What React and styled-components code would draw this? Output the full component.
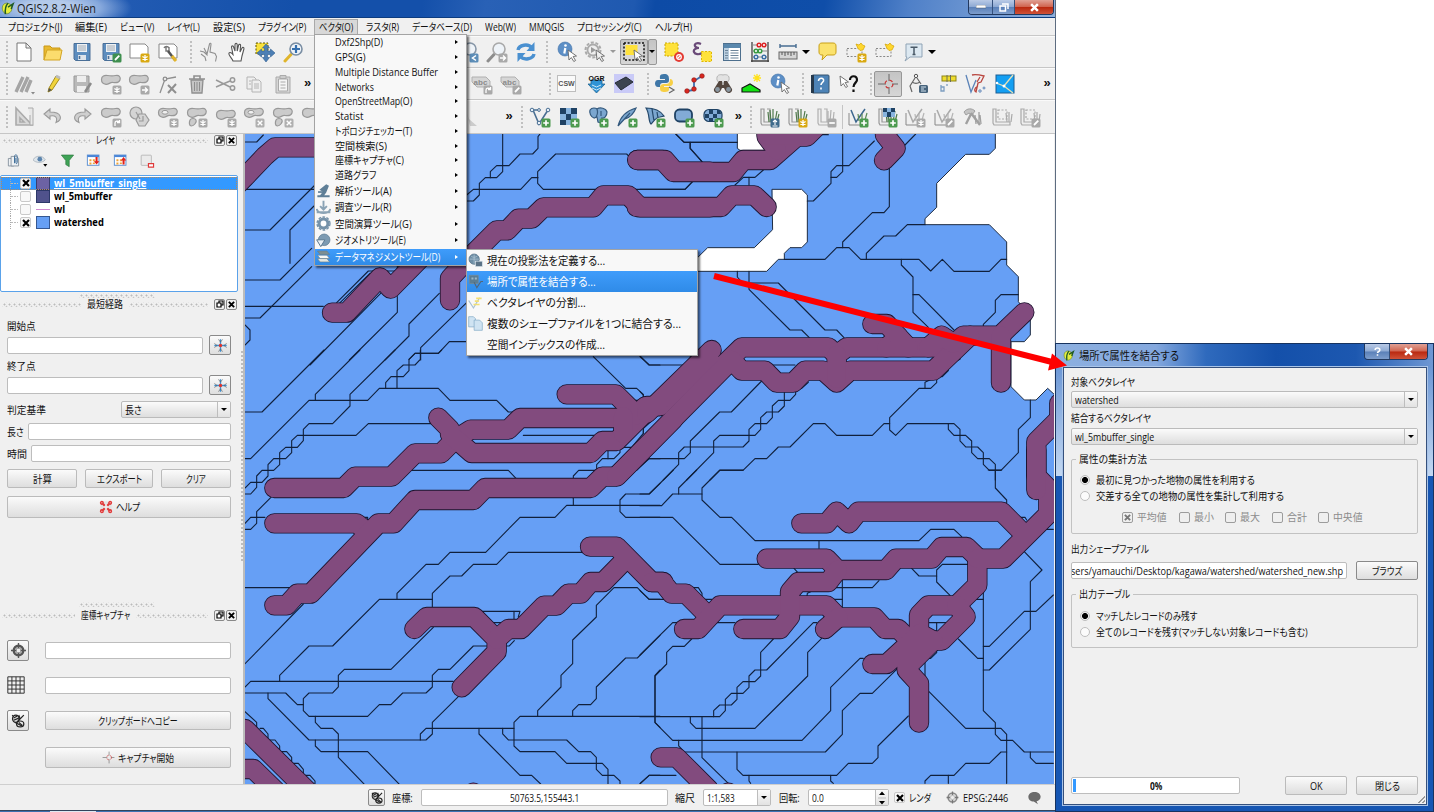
import React, { useLayoutEffect, useRef, useState } from 'react';
import styled, { createGlobalStyle, css } from 'styled-components';

const Global = createGlobalStyle`
  * { box-sizing: border-box; }
  body { margin: 0; background: #fff; overflow: hidden; }
`;

const uiFont = '"Open Sans", "Noto Sans CJK JP", sans-serif';

/* ---------- text that keeps the metrics of the narrow UI face ---------- */
const FitBox = styled.span`
  display: inline-block;
  flex: none;
  white-space: nowrap;
  text-align: left;
  text-decoration: inherit;
`;
const FitInner = styled.span`
  display: inline-block;
  transform-origin: 0 50%;
  white-space: nowrap;
  text-decoration: inherit;
`;
function Fit({ w, children }) {
  const ref = useRef(null);
  const [k, setK] = useState(1);
  useLayoutEffect(() => {
    setK(w / ref.current.offsetWidth);
  }, [w, children]);
  return (
    <FitBox style={{ width: w }}>
      <FitInner ref={ref} style={{ transform: `scaleX(${k})` }}>{children}</FitInner>
    </FitBox>
  );
}

/* ---------- frame ---------- */
const Screen = styled.div`
  position: relative;
  width: 1434px;
  height: 812px;
  overflow: hidden;
  background: #fff;
  font: 10.5px/14px ${uiFont};
  font-feature-settings: "palt";
  color: #111;
`;
const Window = styled.div`
  width: 1056px;
  height: 812px;
  display: flex;
  flex-direction: column;
  background: #f0f0f0;
  border-right: 1px solid #5d6c80;
`;
const TitleBar = styled.div`
  height: 18px;
  flex: none;
  display: flex;
  align-items: center;
  padding-left: 1px;
  background: radial-gradient(ellipse 82px 24px at 50px 8px, #b4caea 30%, #86a8dc 62%, transparent 100%),
    linear-gradient(100deg, #2b62b8 0, #1450aa 28%, #1450aa 40%, #2961b6 46%, #1f59b0 60%, #0d4ba6 62%, #0f4ea9 78%, #4f80c8 86%, #8fb0dd 100%);
  border-bottom: 1px solid #0c3c80;
  color: #1a1a1a;
  font-size: 12px;
  gap: 2px;
`;
const WinButtons = styled.div`
  display: flex;
  margin-left: auto;
  align-self: flex-start;
  height: ${(p) => p.$h || 15}px;
  margin-right: ${(p) => p.$mr || 0}px;
  border: 1px solid #22395f;
  border-top: 0;
  border-radius: 0 0 4px 4px;
  overflow: hidden;
`;
const WinButton = styled.div`
  width: ${(p) => p.$w}px;
  display: flex;
  align-items: center;
  justify-content: center;
  border-left: ${(p) => (p.$first ? 0 : '1px solid #34507c')};
  background: ${(p) => p.$red
    ? 'linear-gradient(#e0a195, #d0644f 48%, #b9280f 52%, #cf5238)'
    : 'linear-gradient(#b9cae6, #8da9d3 48%, #5a80b8 52%, #7d9dcc)'};
`;
const MenuBar = styled.div`
  height: 18px;
  flex: none;
  display: flex;
  align-items: center;
  gap: 13px;
  padding-left: 8px;
  border-bottom: 1px solid #c8c8c8;
`;
const MenuItem = styled.div`
  display: flex;
  ${(p) => p.$open && css`
    background: #d8d8d8;
    outline: 1px solid #a9a9a9;
    margin: 0 -4px;
    padding: 0 4px;
  `}
`;
const Toolbar = styled.div`
  height: ${(p) => p.$h}px;
  flex: none;
  display: flex;
  align-items: center;
  border-bottom: 1px solid #c6c6c6;
  box-shadow: inset 0 1px #fafafa;
`;
const Slot = styled.div`
  width: ${(p) => p.$w || 28.75}px;
  flex: none;
  height: 26px;
  display: flex;
  align-items: center;
  justify-content: center;
  ${(p) => p.$pressed && css`
    background: linear-gradient(#c4c4c4, #d6d6d6);
    border: 1px solid #979797;
    border-radius: 2px;
  `}
`;
const Gap = styled.div`
  flex: none;
  width: ${(p) => p.$w}px;
`;
const Handle = styled.div`
  flex: none;
  width: ${(p) => p.$w || 5}px;
  height: 24px;
  background: radial-gradient(circle, #c0c0c0 0.8px, transparent 1.2px) 0 0 / 4px 4px;
`;
const Divider = styled.div`
  width: 1px;
  flex: none;
  height: 24px;
  margin: 0 1px;
  background: #c4c4c4;
`;
const More = styled.div`
  font: bold 13px/20px "Liberation Sans", sans-serif;
  width: 10px;
  flex: none;
  text-align: center;
  padding-bottom: 2px;
`;
const Caret = styled.i`
  flex: none;
  border: ${(p) => p.$s || 4}px solid transparent;
  border-top-color: ${(p) => p.$c || '#000'};
  border-bottom: 0;
`;
const Body = styled.div`
  flex: none;
  height: 650px;
  display: flex;
`;
const Dock = styled.div`
  width: 238px;
  flex: none;
  display: flex;
  flex-direction: column;
`;
const DockSplit = styled.div`
  width: 7px;
  flex: none;
  padding: 216px 0 0 2px;
  border-right: 2px solid #bcbcbc;
  &::before {
    content: '';
    display: block;
    height: 212px;
    width: 3px;
    background: radial-gradient(circle, #bdbdbd 0.8px, transparent 1.2px) 0 0 / 4px 4px;
  }
`;
const DockHead = styled.div`
  height: 12px;
  display: flex;
  align-items: center;
  gap: 6px;
  margin-top: ${(p) => p.$mt || 0}px;
  padding: 0 1px 0 2px;
`;
const Dots = styled.div`
  height: 5px;
  flex: ${(p) => (p.$w ? 'none' : 1)};
  width: ${(p) => (p.$w ? p.$w + 'px' : 'auto')};
  margin: ${(p) => p.$m || 0};
  background: radial-gradient(circle, #bbb 0.8px, transparent 1.2px) 0 0 / 5px 5px,
    radial-gradient(circle, #c6c6c6 0.7px, transparent 1.1px) 2px 2px / 5px 5px;
`;
const MiniBtn = styled.div`
  width: 11px;
  height: 11px;
  border: 1px solid #888;
  border-radius: 2px;
  display: flex;
  align-items: center;
  justify-content: center;
  & + & { margin-left: -5px; }
`;
const LayerTools = styled.div`
  height: 29px;
  display: flex;
  align-items: center;
  padding-left: 1px;
`;
const Tree = styled.div`
  height: 117px;
  flex: none;
  border: 1px solid #5aa2ea;
  border-radius: 2px;
  background: #fff;
  padding-top: 0.5px;
`;
const TreeRow = styled.div`
  height: 13.2px;
  display: flex;
  align-items: center;
  padding-left: 9px;
  font: bold 10.5px/13px ${uiFont};
  background: ${(p) => (p.$on ? '#3399ff' : 'transparent')};
  color: ${(p) => (p.$on ? '#fff' : '#000')};
  outline: ${(p) => (p.$on ? '1px dotted #b58a5c' : 'none')};
  outline-offset: -1px;
  text-decoration: ${(p) => (p.$on ? 'underline' : 'none')};
`;
const Branch = styled.div`
  width: 8px;
  height: 13.2px;
  border-left: 1px dotted #aaa;
  background: linear-gradient(90deg, #bbb 60%, transparent 0) 0 6px / 3px 1px repeat-x;
  margin-right: 2px;
`;
const Check = styled.div`
  width: ${(p) => p.$s || 11}px;
  height: ${(p) => p.$s || 11}px;
  flex: none;
  border: 1px solid ${(p) => (p.$dim ? '#9c9c9c' : '#c9c9c9')};
  border-radius: 2px;
  background: ${(p) => (p.$dim ? '#efefef' : '#f8f8f8')};
  display: flex;
  align-items: center;
  justify-content: center;
`;
const Swatch = styled.div`
  width: 14px;
  height: ${(p) => (p.$line ? 1 : 13)}px;
  margin: 0 4px 0 5px;
  flex: none;
  background: ${(p) => p.$c};
  border: ${(p) => (p.$line ? 0 : '1px solid rgba(20,40,80,.6)')};
`;
const Row = styled.div`
  display: flex;
  align-items: center;
  height: ${(p) => p.$h}px;
  gap: ${(p) => p.$gap || 0}px;
  margin-top: ${(p) => p.$mt || 0}px;
  justify-content: ${(p) => p.$j || 'flex-start'};
  padding-left: ${(p) => p.$pl || 0}px;
`;
const Form = styled.div`
  padding: 0 7px;
`;
const Input = styled.div`
  height: 17px;
  flex: ${(p) => (p.$w ? 'none' : 1)};
  width: ${(p) => (p.$w ? p.$w + 'px' : 'auto')};
  border: 1px solid #bdbdbd;
  border-radius: 2px;
  background: #fff;
  display: flex;
  align-items: center;
  justify-content: ${(p) => p.$j || 'flex-start'};
  overflow: hidden;
  position: relative;
`;
const Button = styled.div`
  height: ${(p) => p.$h || 19}px;
  flex: ${(p) => (p.$w ? 'none' : 1)};
  width: ${(p) => (p.$w ? p.$w + 'px' : 'auto')};
  border: 1px solid ${(p) => (p.$strong ? '#8a8a8a' : '#bbb')};
  border-radius: 2px;
  background: linear-gradient(#fbfbfb, #ececec 50%, #dedede);
  display: flex;
  align-items: center;
  justify-content: center;
  gap: 3px;
`;
const Combo = styled(Button)`
  height: 17px;
  justify-content: space-between;
  padding-left: ${(p) => p.$pl || 3}px;
  background: ${(p) => (p.$white ? '#fff' : 'linear-gradient(#fbfbfb, #ececec 50%, #dedede)')};
`;
const ComboArrow = styled.div`
  width: 13px;
  height: 100%;
  border-left: 1px solid #bdbdbd;
  display: flex;
  align-items: center;
  justify-content: center;
  background: linear-gradient(#fbfbfb, #e2e2e2);
`;
const MapFrame = styled.div`
  width: 809px;
  height: 650px;
  overflow: hidden;
  svg { display: block; }
`;
const Status = styled.div`
  height: 26px;
  flex: none;
  display: flex;
  align-items: center;
  padding-left: 368px;
  border-top: 1px solid #cfcfcf;
`;
const TaskEdge = styled.div`
  height: 2px;
  flex: none;
  background: linear-gradient(90deg, #3b6fae 50px, #dfe8f2 50px, #dfe8f2 96px, #3f73b4 96px);
  border-top: 1px solid #33435c;
`;

/* ---------- popup menus ---------- */
const Popup = styled.div`
  position: absolute;
  left: ${(p) => p.$x}px;
  top: ${(p) => p.$y}px;
  width: ${(p) => p.$w}px;
  background: #f8f8f8;
  border: 1px solid #a3a3a3;
  box-shadow: 2px 2px 2px rgba(0, 0, 0, 0.55);
`;
const PopupRow = styled.div`
  height: ${(p) => p.$h}px;
  display: flex;
  align-items: center;
  padding-right: 7px;
  color: ${(p) => (p.$on ? '#fff' : '#111')};
  background: ${(p) => (p.$on ? 'linear-gradient(#3f9cfb, #2f8be8)' : 'none')};
  font-size: ${(p) => p.$fs || 10.5}px;
`;
const PopupIcon = styled.div`
  width: 20px;
  height: 16px;
  flex: none;
  display: flex;
  align-items: center;
  padding-left: 1px;
`;
const SubArrow = styled.i`
  margin-left: auto;
  margin-right: 1px;
  border: 2.5px solid transparent;
  border-left: 3.5px solid ${(p) => (p.$on ? '#fff' : '#000')};
  border-right: 0;
`;

/* ---------- dialog ---------- */
const Dialog = styled.div`
  position: absolute;
  left: 1055px;
  top: 343px;
  width: 379px;
  height: 469px;
  padding: 0 6px 6px 7px;
  border: 1px solid #17335f;
  background: linear-gradient(90deg, #8db0e0 0, #84a8de 100px, #2f6abd 150px, #1450aa 220px, #1d58b0 300px, #6f98d4) 0 0 / 100% 24px no-repeat,
    linear-gradient(#6d98d6, #c3d8f2) 0 24px / 100% 108px no-repeat, #1656b3;
  display: flex;
  flex-direction: column;
`;
const DialogTitle = styled.div`
  height: 23px;
  flex: none;
  display: flex;
  align-items: center;
  gap: 4px;
  font-size: 11.5px;
  color: #111;
`;
const Client = styled.div`
  flex: 1;
  background: #f0f0f0;
  border: 1px solid #35507c;
  outline: 1px solid #a9c4e8;
  padding: 7px 8px 0 7px;
  display: flex;
  flex-direction: column;
  position: relative;
`;
const Group = styled.div`
  border: 1px solid #c2c2c2;
  border-radius: 2px;
  height: ${(p) => p.$h}px;
  margin-top: ${(p) => p.$mt}px;
  padding-left: 8px;
`;
const GroupTitle = styled.div`
  margin: -8px 0 0 -4px;
  padding: 0 3px;
  height: 14px;
  width: max-content;
  background: #f0f0f0;
`;
const Radio = styled.div`
  width: 10px;
  height: 10px;
  border-radius: 50%;
  border: 1px solid #bdbdbd;
  background: ${(p) => (p.$on ? 'radial-gradient(circle, #000 2.6px, #eee 3.4px)' : '#fbfbfb')};
  margin-right: 6px;
  flex: none;
`;
const Dim = styled.div`
  display: flex;
  align-items: center;
  gap: 4px;
  color: #8c8c8c;
  margin-right: 11.5px;
`;
const Grip = styled.div`
  position: absolute;
  right: 1px;
  bottom: 1px;
  width: 10px;
  height: 10px;
  background: repeating-linear-gradient(135deg, #999 0 1px, transparent 1px 3px);
  clip-path: polygon(100% 0, 100% 100%, 0 100%);
`;
const Bar = styled.div`
  position: absolute;
  left: 1px;
  top: 1px;
  width: 3px;
  height: 13px;
  background: #3399ff;
`;
const ArrowLayer = styled.svg`
  position: absolute;
  left: 0;
  top: 0;
  pointer-events: none;
`;

/* ---------- icons ---------- */
const I = ({ children, s = 22 }) => (
  <svg width={s} height={s} viewBox="0 0 22 22" fill="none">{children}</svg>
);
const badgeColor = { add: '#4c9a4f', star: '#d9a912', pen: '#3f8f4f', up: '#3f6b8c', gray: '#a9a9a9', cross: '#b0b0b0', blue: '#5c8db8' };
const Badge = ({ k, t }) => (
  <g>
    <rect x="12.5" y="12.5" width="9" height="9" rx="1.5" fill={badgeColor[k]} />
    {t === '+' && <path d="M17 14.2v5.6M14.2 17h5.6" stroke="#fff" strokeWidth="1.7" />}
    {t === '*' && <path d="M17 14v6M14.4 15.5l5.2 3M14.4 18.5l5.2-3" stroke="#fff" strokeWidth="1.3" />}
    {t === '/' && <path d="M15 19l4.3-4.3" stroke="#fff" strokeWidth="1.8" />}
    {t === 'x' && <path d="M14.7 14.7l4.6 4.6M19.3 14.7l-4.6 4.6" stroke="#fff" strokeWidth="1.4" />}
    {t === '>' && <path d="M14 17h5M17 14.5l2.5 2.5-2.5 2.5" stroke="#fff" strokeWidth="1.4" />}
    {t === '<' && <path d="M19 14.5L15.5 17l3.500 2.500" stroke="#fff" strokeWidth="1.5" />}
    {t === '@' && <path d="M15 20v-3c0-2 3-2.500 4-1M19.500 14v2.500H17" stroke="#fff" strokeWidth="1.3" />}
    {t === '-' && <path d="M14.2 17h5.6" stroke="#fff" strokeWidth="1.7" />}
    {t === '^' && <path d="M17 19v-5M15 16l2-2 2 2M14.5 20h5" stroke="#fff" strokeWidth="1.1" />}
  </g>
);
const Blob = ({ y = 0 }) => (
  <path transform={`translate(0 ${y})`} d="M1.500 6.500c0-3.500 3-4.500 6-4s5 .8 8 0c3.500-.8 5.500 1.500 4.500 4.500-1 3-4 3-7 2.500-3-.4-4 2-7 1.800-3-.3-4.500-2-4.500-4.800z" fill="#cbcbcb" stroke="#989898" strokeWidth="1.200" />
);
const Blob2 = () => <path d="M4 14c1-2 5-2 6 0s-2 6-4.500 6S3 16.500 4 14z" fill="#cbcbcb" stroke="#989898" strokeWidth="1.200" />;
const Hole = () => <ellipse cx="8" cy="6.300" rx="3" ry="1.900" fill="#f0f0f0" stroke="#9a9a9a" />;
const Pointer = ({ x = 0, y = 0, f = '#fff' }) => (
  <path transform={`translate(${x} ${y})`} d="M0 0l1 10 2.300-2.500 2.500 4 1.800-1-2.500-4L8.500 6z" fill={f} stroke="#666" strokeWidth="0.900" />
);
const Lens = ({ c, h }) => (
  <g>
    <path d="M2 20l6-6.500" stroke={h} strokeWidth="3" strokeLinecap="round" />
    <circle cx="13" cy="8" r="6" fill="#eef3f8" stroke={c} strokeWidth="1.600" />
  </g>
);
const ic = {
  new: <path d="M4 2h9l5 5v13H4z M13 2v5h5" fill="#fff" stroke="#777" />,
  open: <g><path d="M2 19V5h6l2 2h8v3" fill="#e8b930" stroke="#c99715" /><path d="M2 19l3-10h15l-2 10z" fill="#fbdc6d" stroke="#d3a423" /></g>,
  save: <g><path d="M3 2.500h16v17H4.500L3 18z" fill="#5d8dbe" stroke="#4a6f97" /><path d="M6 3h10v8H6z" fill="#eef1f4" /><path d="M7 5h8M7 7h8M7 9h8" stroke="#8d99a5" strokeWidth=".8" /><path d="M7 14h8v5H7z" fill="#dfe4ea" /><path d="M8.500 15v3" stroke="#4a6f97" strokeWidth="1.600" /></g>,
  paper: <path d="M2 3h15l3 3v11H2z" fill="#fff" stroke="#888" />,
  wrench: <g><path d="M7 7c1-2 4-2 5 0M9 6v4h3V6" stroke="#777" strokeWidth="1.400" /><path d="M11 10l7 9" stroke="#555" strokeWidth="2.600" /><path d="M15 15l4 5" stroke="#e2b52b" strokeWidth="3" /></g>,
  touch: <path d="M2 10l4 1 3 3V13l2.500-10c.4-1.200 1.700-.7 1.500.4L12 11l5 1.500 1.500 3-1 5M3 13l4 3 1 4M9 13l-3-6" stroke="#8f8f8f" strokeWidth="1.100" />,
  hand: <path d="M7 20c-1-3-5-6-4-8 1-1.500 3 .5 4 1.500L5.500 6c0-1.500 1.800-1.500 2.100 0L9 10V3.500c.2-1.500 2-1.500 2.200 0V10l1.400-5.800c.4-1.400 2.200-1 2 .4L14 11l2-4c.8-1.300 2.300-.4 1.900 1L16 15l-1 5z" fill="#fff" stroke="#555" strokeWidth="1.100" />,
  panSel: <g><rect x="2" y="2" width="12" height="11" fill="#f8e13c" stroke="#5a5000" strokeDasharray="2 1.500" /><path d="M12 3l3.500 4h-2v3h3V8l4.500 4-4.500 4v-2.500h-3v3h2L12 21l-3.500-4.500h2v-3h-3V16L3 12l4.500-4v2h3V7h-2z" fill="#4d7fb5" stroke="#2f5e91" strokeWidth=".6" /></g>,
  zoomIn: <g><Lens c="#7a8ea3" h="#e0b52c" /><path d="M13 4v8M9 8h8" stroke="#356fae" strokeWidth="2.200" /></g>,
  zoomLast: <g><Lens c="#8797a8" h="#999" /><Badge k="blue" t="<" /></g>,
  zoomNext: <g><Lens c="#a9a9a9" h="#8d8d8d" /><Badge k="gray" t=">" /></g>,
  refresh: <g stroke="#4a90d0" strokeWidth="3.400"><path d="M3 9c1-5 10-7 14-2" /><path d="M19 13c-1 5-10 7-14 2" /><path d="M19.500 1v9h-8z" fill="#4a90d0" stroke="none" /><path d="M2.500 21v-9h8z" fill="#4a90d0" stroke="none" /></g>,
  info: <g><circle cx="9" cy="8" r="7" fill="#5d8fc6" stroke="#3d6ea6" strokeWidth=".6" /><circle cx="9.500" cy="4.500" r="1.300" fill="#fff" /><path d="M9.300 7l-1 5.500" stroke="#fff" strokeWidth="2.200" /><Pointer x="12" y="9" /></g>,
  gear: <g><circle cx="9" cy="9" r="7.500" stroke="#aaa" strokeWidth="2" strokeDasharray="3 1.700" /><circle cx="9" cy="9" r="5.500" stroke="#aaa" strokeWidth="1.800" fill="#eee" /><path d="M7 6l5 3-5 3z" fill="#999" /><Pointer x="12" y="9" f="#eee" /></g>,
  select: <g><rect x="1" y="2" width="20" height="17" stroke="#111" strokeWidth="1.500" strokeDasharray="2 1.600" fill="#d8d8d8" /><rect x="2.500" y="4" width="12" height="10" fill="#ffe23b" /><Pointer x="11" y="9" /></g>,
  deselect: <g><rect x="2" y="2" width="13" height="13" fill="#ffe23b" stroke="#c8a400" strokeDasharray="2 1.500" /><circle cx="16" cy="16" r="5" fill="#e33b33" /><circle cx="16" cy="16" r="2.300" stroke="#fff" strokeWidth="1.200" /><path d="M14.500 17.500l3-3" stroke="#fff" strokeWidth="1.200" /></g>,
  eps: <g><path d="M9 3C5 1 2 3 3 5s3 2 4 2C4 7 1 8.500 2 11s5 3 8 1" stroke="#6a4a78" strokeWidth="2.200" /><rect x="9.500" y="10.500" width="10" height="10" fill="#ffe23b" stroke="#e0b800" strokeDasharray="2 1.500" /></g>,
  table: <g><rect x="2.500" y="2.500" width="17" height="17" fill="#fff" stroke="#4d6f8d" /><path d="M2.500 3h17v4h-17z" fill="#5a88ad" /><path d="M3 7h5v12H3z" fill="#bcd0e0" /><path d="M9.500 9.500h8M9.500 12h8M9.500 14.500h8M9.500 17h8M4 9.500h3M4 12h3M4 14.500h3M4 17h3" stroke="#6c8499" strokeWidth="1.100" /></g>,
  abacus: <g><path d="M3 1v20M19 1v20M2 20h18" stroke="#444" strokeWidth="1.300" /><path d="M3 4h16M3 10h16M3 16h16" stroke="#888" /><g fill="#fff" strokeWidth="1.500"><g stroke="#d22"><circle cx="10" cy="4" r="1.800" /><circle cx="15" cy="4" r="1.800" /></g><g stroke="#3a9a42"><circle cx="7" cy="10" r="1.800" /><circle cx="11" cy="10" r="1.800" /></g><g stroke="#3c6fa5"><circle cx="7" cy="16" r="1.800" /><circle cx="15" cy="16" r="1.800" /></g></g></g>,
  ruler: <g><path d="M3 5h16M3 3v4M19 3v4" stroke="#476c91" strokeWidth="1.400" /><rect x="2" y="11" width="18" height="7" fill="#d5d5d5" stroke="#666" /><path d="M5 11v3M8 11v4M11 11v3M14 11v4M17 11v3" stroke="#555" /></g>,
  tip: <path d="M3 5c0-2 1-3 3-3h11c2 0 3 1 3 3v6c0 2-1 3-3 3h-6l-5 5 1-5H6c-2 0-3-1-3-3z" fill="#fbe26d" stroke="#c9a017" />,
  bm: <g><path d="M2 7.500h15v8H2z" stroke="#888" strokeDasharray="2 1.600" /><path d="M11 3l3 1 2-2 1.500 2L20 5l-2 4-3 .5-2-2z" fill="#ffd72e" stroke="#d3a200" strokeWidth=".7" /></g>,
  text: <g><path d="M4 3h16v13H8l-5 4 2-4H4z" fill="#dce8f1" stroke="#8fa3b5" /><path d="M8.500 6.200h7M12 6v7.500M10.500 13.500h3" stroke="#4a5a68" strokeWidth="1.500" /></g>,
  pens: <g stroke="#a5a5a5" strokeWidth="3.400"><path d="M3 19L10 4M8 19l7-15M13 19l5-12" /></g>,
  pen: <g><path d="M7 15L14 3l4 2-8 12-4 2z" fill="#f1d43c" stroke="#a48b1c" /><path d="M14 3l4 2" stroke="#b9bbbd" strokeWidth="3" /><path d="M6 19l1-4 3 2z" fill="#555" /></g>,
  saveG: <g><path d="M3 3h15v16H4l-1-1z" fill="#b9b9b9" stroke="#999" /><path d="M6 3h9v6H6zM6 13h9v6H6z" fill="#eee" /><path d="M14 19l6-9" stroke="#8b8b8b" strokeWidth="2.500" /></g>,
  node: <g stroke="#8f8f8f" strokeWidth="1.300"><path d="M3 20L8 6l11-2" /><circle cx="8" cy="6" r="1.800" fill="#eee" /><path d="M11 12l8 8M19 11l-8 9" strokeWidth="2" /></g>,
  trash: <g><path d="M5 7h12l-1 13H6z" fill="#c6c6c6" stroke="#8e8e8e" strokeWidth="1.300" /><path d="M3 6h16M8 3h6v3H8z" stroke="#8e8e8e" strokeWidth="1.600" /><path d="M8.500 9v9M11 9v9M13.500 9v9" stroke="#8e8e8e" /></g>,
  cut: <g stroke="#999" strokeWidth="1.500"><path d="M1 7l14 7M1 14l14-6" /><circle cx="17.500" cy="7" r="2.200" /><circle cx="17.500" cy="15" r="2.200" /></g>,
  copy: <g stroke="#b4b4b4" fill="#efefef"><path d="M4 4h7l2 2v10H4z" /><path d="M9 7h7l2 2v10H9z" /><path d="M11 11h5M11 13h5M11 15h5M6 8h2M6 11h2" /></g>,
  paste: <g stroke="#aaa"><path d="M4 4h14v16H4z" fill="#d6d6d6" /><path d="M6.500 6h9v12h-9z" fill="#f5f5f5" /><path d="M8 2.500h6v3H8z" fill="#ccc" /><path d="M8.500 9h5M8.500 12h5M8.500 15h5" /></g>,
  tri: <g stroke="#aaa" strokeWidth="1.600"><path d="M3 2l16 17H3z" fill="#d8d8d8" /><path d="M7 12l4 4H7z" fill="#f0f0f0" /><path d="M15 2h5v17h-3V9" fill="#e8e8e8" strokeWidth="1" /></g>,
  undo: <path d="M8 3L2 8l6 5v-3c5-1 8 1 6 6.500 7-3 6-10.500-6-10.500z" fill="#cfcfcf" stroke="#9a9a9a" strokeWidth="1.100" />,
  redo: <path d="M14 3l6 5-6 5v-3c-5-1-8 1-6 6.500C1 13.500 2 6 14 6z" fill="#cfcfcf" stroke="#9a9a9a" strokeWidth="1.100" />,
  hex: <g stroke="#9a9a9a" strokeWidth="1.200" fill="#d4d4d4"><circle cx="8" cy="7" r="6" /><path d="M11 8h6l4 6-4 6h-6l-3-6z" /><path d="M8 6l4 7M15 10v5h-4" fill="none" /></g>,
  abc: <g><path d="M1 4h14l4 4v6H6l-5-5z" fill="#d6d6d6" stroke="#b0b0b0" /><text x="9.500" y="11.500" fontSize="8" fontWeight="700" fill="#8c8c8c" textAnchor="middle" fontFamily="Liberation Sans">abc</text></g>,
  csw: <g><rect x="1.500" y="2.500" width="18" height="16" fill="#fafafa" stroke="#bdbdbd" /><text x="10.500" y="12.500" fontSize="7" fontWeight="700" fill="#555" textAnchor="middle" fontFamily="Liberation Sans">CSW</text></g>,
  ogr: <g><path d="M6 7h11v4h3l-8.500 9L3 11h3z" fill="#2f93d6" stroke="#22648f" strokeWidth=".8" /><path d="M7 12l4.500 2 4.500-2M7 15l4.500 2 4.500-2" stroke="#cfe8f7" /><text x="11.500" y="7.500" fontSize="7" fontWeight="700" fill="#111" textAnchor="middle" fontFamily="Liberation Sans">OGR</text></g>,
  tile: <g><rect x="1" y="1" width="20" height="19" fill="#c9caf7" /><path d="M2 10L13 4l7 5-12 8z" fill="#3c4450" stroke="#262c36" /></g>,
  python: <g><path d="M10 1c-5 0-4 3-4 5h5v1H4c-4 0-4 7 0 7h2c0-4 1-4 5-4s4-1 4-4-1-5-5-5z" fill="#3f77a8" /><path d="M11 19c5 0 4-3 4-5h-5v-1h6c4 0 4-7 0-7 0 4-1 5-5 5s-5 1-5 4 1 4 5 4z" fill="#f7cf45" /><path d="M15 14l5 3-5 3" stroke="#666" strokeWidth="1.200" /></g>,
  route: <g><path d="M4 18l7-1V8l8-5" stroke="#3f6fb0" strokeWidth="1.800" /><g fill="#d8281f" stroke="#8a1010" strokeWidth=".6"><circle cx="4" cy="18" r="2.300" /><circle cx="11" cy="16" r="2.300" /><circle cx="11" cy="7" r="2.300" /><circle cx="19" cy="3" r="2.300" /></g></g>,
  binoc: <g><path d="M5 7c-1-5 3-6 6-5 3-1 7 0 6 5l-2 3H7z" fill="#e2e2e2" stroke="#b5b5b5" /><path d="M7 8h3l.5 4h1L12 8h3l5 8c1 4-5 6-7 1l-1-2h-2l-1 2c-2 5-8 3-7-1z" fill="#53463e" /><circle cx="5.500" cy="16.500" r="2.400" fill="#8996a0" /><circle cx="16.500" cy="16.500" r="2.400" fill="#8996a0" /></g>,
  terrain: <g><path d="M2 19V15l8-4 10 6v2z" fill="#12e012" stroke="#111" strokeWidth="1.200" /><path d="M17 1v8M13 5h8M14 2l6 6M20 2l-6 6" stroke="#ffe11c" strokeWidth="1.300" /></g>,
  help: <g><rect x="3" y="2" width="17" height="18" rx="1" fill="#4d83b7" stroke="#37546f" /><path d="M3.500 2v18" stroke="#26394c" strokeWidth="3" /><path d="M9.500 8c0-4 6-3.500 5 0-.5 1.500-2.500 2-2.500 4M12 14.500v2" stroke="#fff" strokeWidth="1.600" /></g>,
  whats: <g><Pointer x="2" y="3" /><path d="M12 7c0-5 7-5 7 0 0 2.500-3.500 3-3.500 7M15.500 16.500v2.500" stroke="#111" strokeWidth="2.200" /></g>,
  cross: <g><path d="M1 11h8M15 11h6M12 1v7M12 14v7" stroke="#666" /><circle cx="12" cy="11" r="4" stroke="#c33" strokeDasharray="3.500 2.800" strokeWidth="1.200" /></g>,
  compass: <g><circle cx="9" cy="3" r="1.700" stroke="#555" /><path d="M8 5L3 13l2 6M10 5l4 6M5 9c3 2 5 2 8 0" stroke="#666" strokeWidth="1.200" /><rect x="12" y="12" width="9" height="8" rx="1.500" fill="#48647c" /><path d="M14 14h5M14 16h3M14 18h5" stroke="#cfe0ec" /></g>,
  pin: <g><rect x="6" y="3" width="14" height="5" fill="#eedc2e" stroke="#8d8416" /><path d="M11 2v7M14.500 2v7" stroke="#6d6f55" /><path d="M5 12v6h3v-4H5M11 11v2" stroke="#7c9dc0" strokeWidth="1.300" /></g>,
  vedit: <g><path d="M1 2l5 17 5-12" stroke="#5b83b8" strokeWidth="1.300" /><path d="M7 2c4-1 8 0 12 1l-3 6-3 1-2 9c-2-1-2-4 2-6M15 4l-3 5" stroke="#b9463f" strokeWidth="1.300" /><circle cx="15" cy="18" r="1.200" stroke="#5b83b8" /><circle cx="19" cy="15" r="1" stroke="#5b83b8" /></g>,
  voro: <g><rect x="2" y="2" width="18" height="18" fill="#149ff2" stroke="#1b5e94" /><path d="M2 10l8 3 9 7M10 13l9-11" stroke="#e6e0b5" strokeWidth="1.300" /><circle cx="3" cy="10" r="1.300" fill="#fff" /><circle cx="10" cy="13" r="1.500" fill="#fff" /></g>,
  vNew: <g><path d="M4 4l6 14 9-14M3 4h6" stroke="#4a6f93" strokeWidth="1.600" /><g fill="#e8f0f7" stroke="#4a6f93"><circle cx="3" cy="4" r="1.800" /><circle cx="10" cy="4" r="1.400" /><circle cx="19" cy="4" r="1.800" /><circle cx="10" cy="17" r="1.800" /></g></g>,
  raster: <g><rect x="2" y="2" width="17" height="17" fill="#88b4de" /><path d="M2 2h6v6H2zM13 2h6v6h-6zM8 8h5v6H8zM2 14h6v5H2z" fill="#1f4264" /></g>,
  pg: <path d="M3 4c2-3 6-2 7-1 3-2 9-1 10 3 0 4-3 7-5 6l-1 5-3-1-1-5-3 1c-3-1-5-5-4-8zM10 3c1 3 1 5-1 8M14 5v5" fill="#7ba6cf" stroke="#34597d" strokeWidth="1.200" />,
  feather: <path d="M2 20c2-8 7-15 18-18-2 5-5 9-11 11M2 20L14 7" fill="#7ba6cf" stroke="#34597d" strokeWidth="1.200" />,
  mssql: <path d="M2 2c6 0 14 2 18 8l-4 1c-4 0-6 4-9 7-3-3-1-10-5-16zM8 3l2 12M13 6l1 6" fill="#7ba6cf" stroke="#24486a" strokeWidth="1.200" />,
  wms: <rect x="2" y="3.500" width="17" height="12" rx="4.500" fill="#82abd6" stroke="#1f4264" strokeWidth="1.800" />,
  wcs: <g><rect x="2" y="3.500" width="18" height="12" rx="5" fill="#82abd6" stroke="#1f4264" strokeWidth="1.200" /><path d="M7 4h4v4H7zM15 4h3l1 4h-4zM3 8h4v4H3zM11 8h4v4h-4zM7 12h4v4H7zM15 12h4l-2 4h-2z" fill="#1f4264" /></g>,
  grass: <g><path d="M3 3h3v13h14v3H4l-1-2zM9 3h3v13" fill="#eee" stroke="#999" strokeWidth="1.200" /><path d="M11 16L10 6M13 16L12 4M15 16l0-13M17 16l2-11M19 16l2-8" stroke="#4f7a4b" strokeWidth="1.200" /></g>,
  grassG: <g stroke="#b0b0b0" strokeWidth="1.200"><path d="M3 3h3v13h14v3H4l-1-2zM9 3h3v13" fill="#eee" /><path d="M13 16V5M15 16l1-12M18 16l1-10" /></g>,
  regionV: (c) => <g><path d="M2 7v12h12V14" stroke="#888" /><path d="M4 4l5 12 9-13" stroke={c} strokeWidth="1.500" /><path d="M12 15l-1-7M15 15V8M18 14l2-7" stroke={c === '#aaa' ? '#b5b5b5' : '#5d8a58'} strokeWidth="1.200" /></g>,
  tools: <g stroke="#a0a0a0"><path d="M2 6c3-4 8-4 11-1l-3 4-3-2-3 2z" fill="#c4c4c4" /><path d="M9 8l-5 10M9 7l9 12" strokeWidth="2.400" /><path d="M14 18l-1-9M17 18V6M19 18l-1-9" strokeWidth="1.300" /></g>,
  reg: <g stroke="#a9a9a9" strokeWidth="1.200"><path d="M2 3h3v13h14v3H3l-1-2z" fill="#eee" /><path d="M7 4h9v9H7z" strokeDasharray="2 1.500" /><path d="M16 16l-1-9M18 16V6M20 16l1-8" /></g>,
  bubble: <path d="M11 3c5 0 9 3 9 7s-3 6-6 6.500L16 21l-6-4c-5 0-8-3-8-7s4-7 9-7z" fill="#6a6a6a" />,
  crs: <g><circle cx="11" cy="11" r="7.500" stroke="#888" strokeWidth="2.500" fill="#d8d8d8" /><path d="M11 1v6M11 15v6M1 11h6M15 11h6" stroke="#777" strokeWidth="2.200" /><circle cx="11" cy="11" r="3.500" stroke="#aaa" fill="#eee" /></g>,
  mouse: <g stroke="#222" strokeWidth="1.700"><ellipse cx="8" cy="8" rx="4.500" ry="5" fill="#ddd" /><path d="M5 7l5-3M5 10l7-3M7 13l10 5M12 3c2 3 2 4 1 6M10 12l9-9M3 3l2 2" /><ellipse cx="14" cy="15" rx="5" ry="4" /><path d="M12 13l5 4" /></g>,
  grid: <path d="M1 1h20v20H1zM6 1v20M11 1v20M16 1v20M1 6h20M1 11h20M1 16h20" stroke="#333" strokeWidth="1.200" />,
  globe: <g><circle cx="11" cy="11" r="7" stroke="#555" strokeWidth="3.500" fill="#ccc" /><path d="M11 0v8M11 14v8M0 11h8M14 11h8" stroke="#555" strokeWidth="2" /><path d="M8 8h6v6H8z" fill="#eee" stroke="#888" /></g>,
  spark: <g><path d="M11 2v18M2 11h18" stroke="#3b8fd0" strokeWidth="2" /><path d="M8 2l3 4 3-4M8 20l3-4 3 4M2 8l4 3-4 3M20 8l-4 3 4 3" stroke="#666" /><circle cx="11" cy="11" r="2.500" fill="#e2342c" /></g>,
  lifebelt: <g><circle cx="11" cy="11" r="7" stroke="#e2e2e2" strokeWidth="4" /><g fill="#fff" stroke="#e03a3a" strokeWidth="2.400"><circle cx="4.500" cy="4.500" r="2" /><circle cx="17.500" cy="4.500" r="2" /><circle cx="4.500" cy="17.500" r="2" /><circle cx="17.500" cy="17.500" r="2" /><path d="M6 6l3 3M16 6l-3 3M6 16l3-3M16 16l-3-3" strokeWidth="3.400" /></g></g>,
  clip: <g stroke="#7b8894" strokeWidth="1.200" fill="#eef1f4"><path d="M2 8h8v11H2z" /><path d="M6 5h8l3 3v11H6z" /><path d="M11 15V5c0-3 4-3 4 0v9c0 2-2 2-2 0V7" fill="none" stroke="#3a6a96" strokeWidth="1.400" /></g>,
  eye: <g><path d="M0 10c4-7 14-7 18 0-4 5-14 5-18 0z" fill="#dfe6ec" stroke="#9aa5b0" /><circle cx="10" cy="9" r="3.500" fill="#5b84ad" /><path d="M15 16h6l-3 4z" fill="#000" /></g>,
  funnel: <path d="M2 3h18l-6.500 8v9l-5-3v-6z" fill="#3fa356" stroke="#2d7740" />,
  expand: (d) => <g><rect x="2" y="3" width="17" height="15" fill="#fff" stroke="#5b8fd0" strokeWidth="1.400" /><path d="M2 4.500h17" stroke="#4a86d8" strokeWidth="3" /><path d="M5 9h3v3H5zM5 14h3v3H5zM10 9h3v3h-3zM10 14h3v2h-3z" fill="#f0a33a" /><path d={d} fill="#e32119" /></g>,
  remove: <g><rect x="3" y="3" width="14" height="14" rx="1" fill="#ebebeb" stroke="#aaa" /><path d="M13 14.500h7v5h-7z" fill="#fff" stroke="#e03a3a" strokeWidth="1.600" /></g>,
  qgis: <g><path d="M5 3c5-3 12 0 12 7S9 21 5 17 1 6 5 3z" fill="#e5ed3f" stroke="#5f7f1e" /><path d="M11 2c-4 4-5 9-4 17M11 8l8-5-3 8" stroke="#1f5a25" strokeWidth="2.400" /></g>,
  scope: <g fill="#5f7f97"><path d="M2 18h18v3H2zM5 10l10-8 4 2-4 10-3 4H6l4-5z" /><path d="M3 12h8v2.500H3z" /></g>,
  anchor: <g stroke="#8aa3b5" strokeWidth="2.800"><path d="M11 1v13M6 9l5 5 5-5M1 13c2 8 18 8 20 0M1 18h20" /></g>,
  cog: <g><circle cx="11" cy="11" r="6.500" stroke="#7592a9" strokeWidth="4.500" fill="#fff" /><circle cx="11" cy="11" r="9.500" stroke="#7592a9" strokeWidth="2" strokeDasharray="4 2" /></g>,
  geom: <g><circle cx="12" cy="10" r="8.500" fill="#7d9bb2" stroke="#56748c" /><path d="M1 10h12l-6 10z" fill="#e9eff4" stroke="#56748c" strokeWidth="1.400" /></g>,
  stack: <g stroke="#67808f" fill="#e5e8e3"><path d="M2 14h14l4 5H6z" /><path d="M2 9h14l4 5H6z" fill="#f8f8f4" /><path d="M2 3h14l4 5H6z" fill="#7d8f93" /></g>,
  world: <g><circle cx="9" cy="9" r="7.500" fill="#6f8fa6" stroke="#3f6079" /><path d="M2 9h14M9 2v14M4 4c3 3 7 3 10 0" stroke="#b6cbd9" /><rect x="11" y="12" width="10" height="8" fill="#5a7286" stroke="#dce6ee" /></g>,
  joinloc: <g><path d="M2 2h13v12H2z" fill="#5b7d93" stroke="#7a8a90" /><path d="M5 5h3v3H5zM10 5h3v3h-3z" fill="#9db7c7" /><path d="M9 12l4 8 6-9h3" stroke="#567" strokeWidth="1.600" /></g>,
  split: <g><path d="M1 8l7 11 9-15" stroke="#a8c0d4" strokeWidth="1.800" /><path d="M12 5h8M10 9h6M8 14h9" stroke="#f3df72" strokeWidth="2.400" /></g>,
  merge: <g fill="#cfe3f2" stroke="#7fa8c6"><path d="M1 1h7l3 3v12H1z" /><path d="M9 6h8l4 4v11H9z" /></g>,
};

const X = ({ c = '#000', s = 8 }) => (
  <svg width={s} height={s} viewBox="0 0 8 8"><path d="M1 1l6 6M7 1L1 7" stroke={c} strokeWidth="2.200" /></svg>
);
const Tool = ({ k, b, w, s, pressed }) => (
  <Slot $w={w} $pressed={pressed}>
    <I s={s}>
      {typeof k === 'string' ? ic[k] : k}
      {b && <Badge k={b[0]} t={b[1]} />}
    </I>
  </Slot>
);

/* ---------- map ---------- */
/* Each sheet has its own origin; its lines are digitised at three units per pixel. */
const sheets = [
  {
    at: [240, 120],
    lines: ['15,66 50,66 70,45', '15,208 60,208 225,208', '15,330 90,330 225,195', '150,430 150,330 222,258', '15,480 120,480 215,385', '15,559 250,559', '15,594 60,594 215,440', '15,615 30,630 30,660 15,675'],
    belts: ['-20,206 15,171 75,108 105,82 225,82'],
  },
  {
    at: [310, 120],
    lines: [
      '578,40 578,155 560,173 541,173 541,155 560,137 597,137 630,102 668,102 684,85 684,50 690,42',
      '541,173 526,173 508,190 508,225 490,243 470,243', '470,225 490,208 632,208 665,173 684,173',
      '960,112 950,102 737,102 683,155 683,190 700,208 1125,208 1148,185', '1097,42 1122,67 1200,67', '1140,67 1140,85 1176,125',
      '80,548 175,453 262,453 262,435', '88,550 180,460', '0,735 212,520', '262,530 262,577 118,720',
      '388,520 297,612 297,648 225,720', '470,548 332,683 332,720', '468,665 418,665 385,700 315,700 297,718',
    ],
    belts: [
      '982,120 1065,120 1095,155 1200,155',
      '1200,262 990,262 955,226 880,226 850,262 700,262 665,296 625,296 592,331 560,331 480,411 420,475 420,541',
      '66,578 110,578 210,472 242,506 425,320',
    ],
  },
  {
    at: [240, 350],
    lines: [
      '252,0 66,186 0,186', '360,0 226,133 226,151',
      '465,0 330,133 330,168 278,221 207,221 190,238 190,272 172,292 137,292 119,308 119,344 101,361 66,361 50,378 50,412 32,432 15,432',
      '15,326 32,326 207,151 383,151 418,115 595,115 630,151 770,151 805,186 820,186',
      '600,221 385,221 348,256 172,256 155,272 155,308 137,326 101,326 84,344 84,378 66,397 32,397 15,414',
      '437,115 437,98 453,80 490,80 507,62 507,28 525,10 541,10 541,0', '471,115 471,62 490,45 525,45 541,28 541,10 595,10 605,0',
      '95,440 50,485 50,520 32,538 15,538', '75,502 32,502 15,520', '15,713 150,713', '190,762 15,941', '512,361 805,361 828,385',
      '850,256 1110,256', '365,502 383,502 383,515', '1060,20 1157,115 1190,115 1210,133 1210,150', '1180,151 1205,151', '1200,18 1227,45 1260,45',
      '1000,385 1000,378 1016,361 1070,361 1070,344 1087,326 1104,326 1104,300', '1104,326 1122,326 1140,308 1140,292 1175,292 1210,250 1210,235 1245,200',
      '1260,326 1227,326 1190,361 1180,361', '1000,445 1000,466', '1260,466 980,466 945,502 840,502 737,607 630,607 595,643 558,643 471,730 471,748',
      '1260,400 1227,432 1157,432 1140,450 1140,485 1157,502 1260,502', '1025,607 805,607 770,643 700,643 665,678 630,678 577,730 577,770',
      '577,748 418,748 278,888 207,888 119,976 119,994', '15,1011 32,994 640,994',
      '580,832 453,958 313,958 295,976 295,1011 278,1029 207,1029 190,1046 190,1082 207,1099 383,1099 418,1064 453,1064 488,1029 558,1029 577,1011 577,976 595,958 630,958 700,888 740,888',
      '722,784 840,784 835,800', '822,784 822,808', '760,818 785,818', '800,888 808,888 823,872', '15,1029 137,1029 172,1064 190,1064',
      '84,1029 84,1046 207,1170 558,1170 577,1152 577,1117 655,1040', '541,1170 541,1152 558,1135 822,1135',
      '226,1099 226,1117 243,1135 278,1135 295,1152 295,1222 375,1305', '226,1170 226,1188 243,1205 383,1205 480,1305', '15,1085 50,1117 50,1135',
      '60,1135 70,1135 84,1152 84,1165', '90,1170 105,1170 119,1188 119,1200', '125,1205 140,1205 155,1222 155,1235', '160,1240 175,1240 190,1258 190,1272', '195,1276 210,1276 225,1293 225,1302',
      '717,1135 717,1152 840,1276 875,1276 902,1302', '788,1135 788,1152 805,1170 980,1170 1016,1205 1052,1205 1069,1222 1069,1258 1087,1276 1122,1276 1140,1293 1140,1302',
      '1260,1099 840,1099 822,1117 822,1188 840,1205 945,1205 980,1240 1087,1240 1104,1258 1104,1302',
      '893,1099 893,1082 963,1011 963,976 998,941 998,870 1069,801 1069,766 1122,713 1192,713 1227,748 1260,748',
      '998,1099 998,1082 1016,1064 1052,1064 1069,1046 1069,1011 1157,924 1192,924 1260,856', '1260,960 1245,976 1245,1117 1260,1132', '1200,1302 1227,1276 1260,1276',
    ],
    belts: [
      '103,414 311,414 345,380 455,380 525,310 603,310 645,268 692,239 805,239 840,204 1170,204', '595,203 630,238 630,252 695,309 1052,309 1087,273 1130,273 1225,178',
      '980,133 1128,133 1190,195 1215,170 1260,168', '1150,200 1150,250', '103,520 350,520 385,548', '103,766 140,766 172,731 212,731 415,520 461,520 525,450 700,450 735,414 1052,414 1087,380 1130,380 1300,208',
      '523,837 560,801 703,801 770,868 770,905 665,1012', '770,868 805,837 843,837 912,767 950,767 985,731 1022,731 1052,696 1090,696 1155,630', '1050,590 1130,590 1235,696 1270,696',
      '15,1137 30,1152 210,1330', '-20,1257 40,1257 130,1345', '700,1328 700,1340',
    ],
  },
  {
    at: [640, 470],
    lines: [
      '0,72 28,72 100,0', '170,0 116,54 116,72', '0,107 65,107 98,72 186,72', '310,0 240,0 186,54 186,90 240,142 275,142 345,212 837,212 872,178 942,178 965,200', '537,212 537,235',
      '0,142 98,142 240,283 355,283', '1045,0 1085,0', '1066,0 1066,54 1100,90 1100,100', '1140,142 1155,142 1160,150', '1210,178 1240,178',
      '1150,242 1206,300 1171,335 1171,478 1048,600 1030,600', '1240,375 1188,424 1153,424 1048,529 1030,529', '1030,350 1030,722 1066,758 1066,793 1083,811 1118,811 1153,846 1240,846', '1000,388 1030,388',
      '867,665 977,775 1083,775 1100,793 1100,940', '955,507 1013,565 1030,565', '1171,846 1171,863 1188,880 1240,880', '1100,846 1083,846 1048,880 977,880 942,916 872,916 855,933 855,940', '925,916 925,940',
      '815,295 837,318 890,318', '985,283 907,283 890,300 890,336 930,376', '462,295 473,307', '607,330 607,410', '580,353 697,353 717,332', '607,388 480,388', '500,388 502,370 512,365',
      '0,362 28,388 90,388', '160,353 175,353 186,370 186,382', '195,388 215,388', '865,458 930,458', '890,458 890,483', '890,541 890,548 872,565 855,565', '855,570 855,640',
      '0,555 98,458 120,458', '225,458 285,458', '155,507 133,529 98,529 80,547 80,582 45,618 45,758 98,811 486,811 572,722 572,652 660,565 670,565',
      '530,458 520,458 380,600 345,600 327,618 327,652 309,670 274,670 256,688 256,722 239,740 0,740', '400,507 362,547 362,618 345,635 309,635 291,652 291,688 274,705 239,705 221,722 221,740',
      '545,505 503,547 503,618 345,775 168,775 151,758 151,740', '186,740 186,863 265,940', '116,811 116,828 133,846 556,846 607,793 607,722 660,670 697,670 770,598',
      '291,846 291,898 309,916 590,916 625,880 697,880 714,863 714,828 805,738', '327,916 327,933 332,940', '572,916 572,933 580,940', '0,940 28,916 108,916',
    ],
    belts: [
      '35,336 67,336 95,371 138,371 200,433', '132,477 175,477 240,406 560,406 595,442 703,442 735,477 775,477 810,512', '380,266 560,266 593,300 738,300 768,266 875,266 905,231 980,231 1012,262 1012,345 950,406 865,406 837,435 837,540',
      '593,300 565,336 475,336 450,365 450,440 420,477 310,477', '555,477 595,442', '484,160 560,160 590,125 627,160 655,125 1085,125 1155,195', '1012,266 1090,266 1225,132 1225,55 1189,18 1189,-60',
      '950,406 977,440 905,512 830,512', '697,582 740,582 840,490 880,512 800,592 800,600 837,640 837,758', '62,862 110,862 205,957', '265,968 266,970',
    ],
  },
  {
    at: [640, 130],
    lines: [
      '108,12 133,37 292,37', '151,37 151,55 186,95', '0,178 135,178 157,155', '285,165 310,142 345,142 370,120', '327,142 327,165', '565,14 530,14',
      '608,12 608,125 590,142 573,142 573,125 590,107 627,107 703,33', '573,142 573,160 520,213 502,213', '748,115 748,230 732,248 697,248 608,336 608,353', '795,45 827,12',
      '433,388 555,388 590,353 627,353 662,388 837,388 872,423 907,388 942,424 1048,424 1083,388 1100,388', '679,388 679,370 732,318 767,318 802,284 855,284',
      '784,388 784,405 819,441 819,547 865,592', '819,494 837,494 942,600', '1135,494 1083,494 1066,511 1066,547 1030,583 1030,590', '292,424 292,441 300,450', '327,424 327,478 450,600 485,600 508,623',
      '327,459 415,459 555,600 590,600 612,623', '0,680 28,705 140,705', '151,678 151,700', '400,705 465,705', '750,670 785,670', '365,753 274,846 239,846 151,933 151,968 133,986 28,986 0,1010',
      '505,757 485,775 467,775 467,793 450,811 415,811 397,828 397,863 380,881 345,881 327,898 327,933 309,951 133,951 116,968 116,1003 70,1050',
      '433,788 433,828 415,846 380,846 362,863 362,898 345,916 239,916 221,933 221,968 140,1050', '210,1050 239,1021 309,1021 345,986 380,986 415,951 450,951 520,881 555,881 590,916 697,916 732,881 749,881',
      '890,750 890,758 872,775 837,775 749,863 749,900 767,916 802,881 925,881 925,898 942,916 977,916 995,933 995,968 1013,986 1048,986 1066,1003 1066,1050',
      '925,881 942,881 960,898 960,933 977,951 1013,951 1030,968 1030,1003 1048,1021 1083,1021 1135,968 1135,898 1171,863 1171,810', '855,775 855,757 890,740 907,740 925,722 925,705 960,688 960,670 995,650', '0,785 10,795 10,803', '10,910 10,895 50,860',
    ],
    belts: [
      '-8,90 67,90 100,126 280,126 310,90 390,90 470,20 500,20 545,-25', '380,-10 380,20 410,60', '380,15 480,15', '-10,231 243,231 275,196 343,196 380,231', '732,91 767,55 735,15 735,-20',
      '20,828 60,828 203,688 235,720 305,652 565,652 590,675 620,652 720,652 930,652 970,617 1080,617 1153,547', '-70,1038 250,715 275,690 305,722 375,722 410,758 460,758 495,722 550,722 590,758 630,722 880,722 990,617',
      '590,675 590,745', '20,850 215,660', '697,582 740,582 775,620 740,652', '775,620 805,652', '865,652 905,617 940,640', '1083,617 1083,758', '1189,1080 1189,935 1262,862', '1258,820 1258,870',
    ],
  },
];
const sea = [
  '1066,0 1066,55 1048,73 977,73 890,160 890,232 855,266 855,284 1048,284 1100,336 1100,405 1135,440 1135,515 1171,560 1171,615 1153,635 1113,635 1113,770 1153,810 1188,810 1223,775 1250,800 1250,0',
  '397,178 485,178 502,195 502,336 485,353 450,353 433,370 433,388 415,388 380,424 150,424 150,405 203,353 343,353 397,300',
  '292,0 292,55 300,61 380,61 380,0',
];
const Sheet = ({ at, children }) => <g transform={`translate(${at[0]} ${at[1]}) scale(.33333)`}>{children}</g>;
function MapView() {
  return (
    <svg width="809" height="650" viewBox="245 134 809 650" fill="none" strokeLinejoin="round" strokeLinecap="round">
      <rect x="245" y="134" width="809" height="650" fill="#669ff5" />
      <Sheet at={[640, 130]}>
        {sea.map((p) => <polygon key={p} points={p} fill="#fff" stroke="#1c2a40" strokeWidth="3" />)}
      </Sheet>
      {sheets.map((s) => (
        <Sheet key={s.at} at={s.at}>
          {s.lines.map((p) => <polyline key={p} points={p} stroke="#10203c" strokeWidth="3.3" />)}
        </Sheet>
      ))}
      {[['#1d1430', 61], ['#824b7e', 56]].map(([c, w]) => (
        <g key={c} stroke={c} strokeWidth={w}>
          {sheets.map((s) => (
            <Sheet key={s.at} at={s.at}>{s.belts.map((p) => <polyline key={p} points={p} />)}</Sheet>
          ))}
        </g>
      ))}
    </svg>
  );
}

const menus = [['プロジェクト(J)', 54], ['編集(E)', 32], ['ビュー(V)', 34], ['レイヤ(L)', 33], ['設定(S)', 32], ['プラグイン(P)', 48], ['ベクタ(O)', 34], ['ラスタ(R)', 33], ['データベース(D)', 60], ['Web(W)', 31], ['MMQGIS', 35], ['プロセッシング(C)', 65], ['ヘルプ(H)', 37]];
const vector = [['Dxf2Shp(D)', 48], ['GPS(G)', 31], ['Multiple Distance Buffer', 103], ['Networks', 39], ['OpenStreetMap(O)', 77], ['Statist', 28], ['トポロジチェッカー(T)', 77], ['空間検索(S)', 52], ['座標キャプチャ(C)', 69], ['道路グラフ', 41],
  ['解析ツール(A)', 57, 'scope'], ['調査ツール(R)', 57, 'anchor'], ['空間演算ツール(G)', 77, 'cog'], ['ジオメトリツール(E)', 71, 'geom'], ['データマネジメントツール(D)', 105, 'stack']];
const submenu = [['現在の投影法を定義する...', 118, 'world'], ['場所で属性を結合する...', 109, 'joinloc'], ['ベクタレイヤの分割...', 99, 'split'], ['複数のシェープファイルを1つに結合する...', 194, 'merge'], ['空間インデックスの作成...', 118]];
const layers = [['wl_5mbuffer_single', 92, '#6c62a4', true], ['wl_5mbuffer', 58, '#50528c', false], ['wl', 11, '#d08ad0', false], ['watershed', 50, '#669ff5', true]];

const Head = ({ t, w, mt }) => (
  <DockHead $mt={mt}>
    <Dots /><Fit w={w}>{t}</Fit><Dots />
    <MiniBtn><svg width="8" height="8" viewBox="0 0 8 8" fill="#fff" stroke="#000" strokeWidth="1.200"><path d="M3 1h4v4H3z" /><path d="M1 3h4v4H1z" /></svg></MiniBtn>
    <MiniBtn><X s={7} /></MiniBtn>
  </DockHead>
);

export default function App() {
  return (
    <Screen>
      <Global />
      <Window>
        <TitleBar>
          <I s={14}>{ic.qgis}</I>
          <Fit w={79}>QGIS2.8.2-Wien</Fit>
          <WinButtons $mr={1}>
            <WinButton $w={23} $first><svg width="10" height="4"><rect width="10" height="3" fill="#fff" stroke="#456" strokeWidth=".5" /></svg></WinButton>
            <WinButton $w={22}><svg width="10" height="9" viewBox="0 0 10 9" fill="none" stroke="#fff" strokeWidth="1.500"><path d="M3 1h6v5M1 3h5.500v5H1z" /></svg></WinButton>
            <WinButton $w={39} $red><X c="#fff" s={9} /></WinButton>
          </WinButtons>
        </TitleBar>
        <MenuBar>
          {menus.map(([t, w]) => <MenuItem key={t} $open={t === 'ベクタ(O)'}><Fit w={w}>{t}</Fit></MenuItem>)}
        </MenuBar>
        <Toolbar $h={32}>
          <Gap $w={5} /><Handle $w={5} />
          <Tool k="new" /><Tool k="open" /><Tool k="save" /><Tool k="save" b={['pen', '/']} /><Tool k="paper" b={['star', '*']} />
          <Tool k={<>{ic.paper}{ic.wrench}</>} />
          <Gap $w={6} /><Handle /><Gap $w={1} /><Tool k="touch" w={28} /><Tool k="hand" /><Tool k="panSel" w={28} /><Tool k="zoomIn" />
          <Gap $w={146} /><Tool k="zoomLast" /><Tool k="zoomNext" /><Tool k="refresh" /><Gap $w={5} /><Handle /><Gap $w={2} />
          <Tool k="info" /><Tool k="gear" /><Caret $c="#999" $s={3.5} /><Gap $w={4} />
          <Tool k="select" w={28} pressed /><Slot $w={9} $pressed><Caret $s={3.5} /></Slot>
          <Gap $w={3} /><Tool k="deselect" /><Tool k="eps" /><Tool k="table" /><Tool k="abacus" /><Tool k="ruler" w={27} /><Caret /><Gap $w={3} />
          <Tool k="tip" /><Tool k="bm" b={['star', '*']} /><Tool k="bm" /><Tool k="text" /><Caret />
        </Toolbar>
        <Toolbar $h={32}>
          <Gap $w={5} /><Handle $w={5} />
          <Tool k={<>{ic.pens}<path d="M18 19h4l-2 2.500z" fill="#888" /></>} /><Tool k="pen" /><Tool k="saveG" /><Tool k={<Blob />} b={['gray', '*']} /><Tool k={<Blob />} b={['gray', '>']} />
          <Tool k="node" /><Tool k="trash" /><Tool k="cut" /><Tool k="copy" /><Tool k="paste" /><Gap $w={5} /><More>»</More>
          <Gap $w={155} /><Tool k="abc" b={['gray', '@']} /><Tool k="abc" b={['gray', '/']} /><Gap $w={22.5} /><Handle />
          <Tool k="csw" /><Tool k="ogr" /><Tool k="tile" /><Gap $w={7} /><Handle />
          <Tool k="python" /><Tool k="route" /><Tool k="binoc" /><Tool k="terrain" /><Tool k="info" /><Gap $w={6} /><Handle />
          <Tool k="help" /><Tool k="whats" /><Gap $w={6} /><Handle /><Tool k="cross" w={28} pressed />
          <Gap $w={2} /><Tool k="compass" /><Tool k="pin" /><Tool k="vedit" /><Tool k="voro" /><Gap $w={23} /><More>»</More>
        </Toolbar>
        <Toolbar $h={34}>
          <Gap $w={5} /><Handle $w={5} />
          <Tool k="tri" /><Tool k="undo" /><Tool k="redo" /><Tool k={<Blob />} b={['gray', '@']} /><Tool k="hex" />
          <Tool k={<><Blob /><Hole /></>} b={['gray', '*']} /><Tool k={<><Blob /><Blob2 /></>} b={['gray', '*']} /><Tool k={<Blob y={2} />} b={['gray', '*']} />
          <Tool k={<><Blob /><Hole /></>} b={['cross', 'x']} /><Tool k={<><Blob /><Blob2 /></>} b={['cross', 'x']} /><Tool k={<Blob />} />
          <Gap $w={134} /><Tool k={<path d="M1 3l3 8 2 9h7l-8-7z" fill="#ccc" />} /><Gap $w={15} /><More>»</More><Gap $w={6} /><Handle /><Gap $w={1} />
          <Tool k="vNew" b={['add', '+']} /><Tool k="raster" b={['add', '+']} /><Tool k="pg" b={['add', '+']} /><Tool k="feather" b={['add', '+']} /><Tool k="mssql" b={['add', '+']} /><Tool k="wms" b={['add', '+']} /><Tool k="wcs" b={['add', '+']} />
          <Gap $w={6} /><More>»</More><Gap $w={6} /><Handle />
          <Tool k="grass" b={['up', '^']} /><Tool k="grass" b={['star', '*']} /><Tool k="grassG" b={['gray', '-']} /><Divider />
          <Tool k={ic.regionV('#3d678f')} b={['add', '+']} /><Tool k={<>{ic.grass}<path d="M7 2h12v9H7z" fill="#88b4de" /><path d="M7 2h4v4H7zM15 2h4v4h-4zM11 6h4v5h-4z" fill="#1f4264" /></>} b={['add', '+']} /><Tool k={ic.regionV('#aaa')} b={['gray', '*']} /><Tool k={ic.regionV('#aaa')} b={['gray', '/']} />
          <Tool k="tools" /><Tool k="reg" /><Tool k="reg" b={['gray', '/']} />
        </Toolbar>
        <Body>
          <Dock>
            <Head t="レイヤ" w={19} />
            <LayerTools>
              {['clip', 'eye', 'funnel'].map((k) => <Tool key={k} k={k} w={26.5} s={15} />)}
              <Tool k={ic.expand('M14 6h3v6h2.500L15.500 17l-4-5H14z')} w={26.5} s={15} />
              <Tool k={ic.expand('M14 17h3v-6h2.500L15.500 6l-4 5H14z')} w={26.5} s={15} />
              <Tool k="remove" w={26.5} s={16} />
            </LayerTools>
            <Tree>
              {layers.map(([t, w, c, on], i) => (
                <TreeRow key={t} $on={i === 0}>
                  <Branch /><Check $s={11}>{on && <X s={8} />}</Check>
                  <Swatch $c={c} $line={i === 2} /><Fit w={w}>{t}</Fit>
                </TreeRow>
              ))}
            </Tree>
            <Dots $w={76} $m="1px 0 0 79px" />
            <Head t="最短経路" w={36} mt={0} />
            <Form>
              <Row $h={14} $mt={9}><Fit w={29}>開始点</Fit></Row>
              <Row $h={20} $mt={2} $gap={6}><Input $w={196} /><Button $w={22} $h={20} $strong><I s={15}>{ic.spark}</I></Button></Row>
              <Row $h={14} $mt={4}><Fit w={29}>終了点</Fit></Row>
              <Row $h={20} $mt={2} $gap={6}><Input $w={196} /><Button $w={22} $h={20} $strong><I s={15}>{ic.spark}</I></Button></Row>
              <Row $h={17} $mt={6} $j="space-between"><Fit w={39}>判定基準</Fit><Combo $w={110}><Fit w={17}>長さ</Fit><ComboArrow><Caret $s={3.5} /></ComboArrow></Combo></Row>
              <Row $h={17} $mt={5} $gap={4}><Fit w={17}>長さ</Fit><Input /></Row>
              <Row $h={17} $mt={5} $gap={4}><Fit w={20}>時間</Fit><Input /></Row>
              <Row $h={19} $mt={7} $gap={8}><Button $w={70}><Fit w={19}>計算</Fit></Button><Button $w={68}><Fit w={45}>エクスポート</Fit></Button><Button><Fit w={20}>クリア</Fit></Button></Row>
              <Row $h={22} $mt={8}><Button $h={22}><I s={14}>{ic.lifebelt}</I><Fit w={24}>ヘルプ</Fit></Button></Row>
            </Form>
            <Dots $w={76} $m="84px 0 0 79px" />
            <Head t="座標キャプチャ" w={49} mt={2} />
            <Form>
              <Row $h={21} $mt={19} $gap={16}><Button $w={22} $h={21} $strong><I s={15}>{ic.globe}</I></Button><Input /></Row>
              <Row $h={18} $mt={15} $gap={20}><I s={18}>{ic.grid}</I><Input /></Row>
              <Row $h={21} $mt={16} $gap={16}><Button $w={22} $h={21} $strong><I s={16}>{ic.mouse}</I></Button><Button><Fit w={80}>クリップボードへコピー</Fit></Button></Row>
              <Row $h={21} $mt={16} $pl={38}><Button $h={21}><I s={13}>{ic.cross}</I><Fit w={56}>キャプチャ開始</Fit></Button></Row>
            </Form>
          </Dock>
          <DockSplit />
          <MapFrame><MapView /></MapFrame>
        </Body>
        <Status>
          <Button $w={17} $h={17} $strong><I s={14}>{ic.mouse}</I></Button><Gap $w={7} /><Fit w={21}>座標:</Fit><Gap $w={8} />
          <Input $w={247} $j="center"><Fit w={69}>50763.5,155443.1</Fit></Input><Gap $w={7} /><Fit w={20}>縮尺</Fit><Gap $w={8} />
          <Combo $w={68} $white><Fit w={28}>1:1,583</Fit><ComboArrow><Caret $s={3.5} /></ComboArrow></Combo><Gap $w={8} /><Fit w={21}>回転:</Fit><Gap $w={8} />
          <Combo $w={81} $h={19} $white><Fit w={12}>0.0</Fit><ComboArrow><svg width="8" height="14" viewBox="0 0 8 14"><path d="M1 4l3-3.500L7 4zM1 10l3 3.500L7 10z" /><path d="M0 7h8" stroke="#bbb" /></svg></ComboArrow></Combo>
          <Gap $w={5} /><Check><X s={8} /></Check><Gap $w={4} /><Fit w={22}>レンダ</Fit><Gap $w={15} /><I s={13}>{ic.crs}</I><Gap $w={4} /><Fit w={45}>EPSG:2446</Fit><Gap $w={19} /><I s={15}>{ic.bubble}</I>
        </Status>
        <TaskEdge />
      </Window>

      <Popup $x={314} $y={34} $w={153}>
        {vector.map(([t, w, k], i) => (
          <PopupRow key={t} $h={i < 10 ? 14.75 : 16.5} $on={i === 14}>
            <PopupIcon>{k && <I s={15}>{ic[k]}</I>}</PopupIcon>
            <Fit w={w}>{t}</Fit><SubArrow $on={i === 14} />
          </PopupRow>
        ))}
      </Popup>
      <Popup $x={466} $y={249} $w={232}>
        {submenu.map(([t, w, k], i) => (
          <PopupRow key={t} $h={21} $on={i === 1} $fs={11}>
            <PopupIcon>{k && <I s={15}>{ic[k]}</I>}</PopupIcon>
            <Fit w={w}>{t}</Fit>
          </PopupRow>
        ))}
      </Popup>

      <Dialog>
        <DialogTitle>
          <I s={12}>{ic.qgis}</I><Fit w={100}>場所で属性を結合する</Fit>
          <WinButtons $h={16} $mr={-1}>
            <WinButton $w={24} $first><svg width="7" height="9" viewBox="0 0 9 11" fill="none" stroke="#fff" strokeWidth="2"><path d="M1.500 3.500c0-3.500 6-3.500 6 0 0 2-3 2-3 4M4.500 9v2" /></svg></WinButton>
            <WinButton $w={38} $red><X c="#fff" s={9} /></WinButton>
          </WinButtons>
        </DialogTitle>
        <Client>
          <Fit w={64}>対象ベクタレイヤ</Fit>
          <Row $h={17} $mt={2}><Combo><Fit w={44}>watershed</Fit><ComboArrow><Caret $s={3} /></ComboArrow></Combo></Row>
          <Row $h={14} $mt={3}><Fit w={80}>結合するベクタレイヤ</Fit></Row>
          <Row $h={17} $mt={3}><Combo><Fit w={79}>wl_5mbuffer_single</Fit><ComboArrow><Caret $s={3} /></ComboArrow></Combo></Row>
          <Group $h={75} $mt={14}>
            <GroupTitle><Fit w={68}>属性の集計方法</Fit></GroupTitle>
            <Row $h={16} $mt={6}><Radio $on /><Fit w={159}>最初に見つかった地物の属性を利用する</Fit></Row>
            <Row $h={16}><Radio /><Fit w={188}>交差する全ての地物の属性を集計して利用する</Fit></Row>
            <Row $h={14} $mt={6} $pl={42}>
              {[['平均値', 30], ['最小', 20], ['最大', 20], ['合計', 20], ['中央値', 30]].map(([t, w], i) => (
                <Dim key={t}><Check $dim>{i === 0 && <X c="#777" s={7} />}</Check><Fit w={w}>{t}</Fit></Dim>
              ))}
            </Row>
          </Group>
          <Row $h={14} $mt={8}><Fit w={78}>出力シェープファイル</Fit></Row>
          <Row $h={19} $mt={5} $gap={9}>
            <Input $w={276} $j="flex-end"><Fit w={272}>sers/yamauchi/Desktop/kagawa/watershed/watershed_new.shp</Fit><Gap $w={3} /></Input>
            <Button $w={62} $strong><Fit w={30}>ブラウズ</Fit></Button>
          </Row>
          <Group $h={54} $mt={14}>
            <GroupTitle><Fit w={51}>出力テーブル</Fit></GroupTitle>
            <Row $h={16} $mt={7}><Radio $on /><Fit w={101}>マッチしたレコードのみ残す</Fit></Row>
            <Row $h={16}><Radio /><Fit w={212}>全てのレコードを残す(マッチしない対象レコードも含む)</Fit></Row>
          </Group>
          <Row $h={19} $mt={128}>
            <Input $w={169} $j="center"><Bar /><b><Fit w={12}>0%</Fit></b></Input>
            <Gap $w={45} /><Button $w={62}><Fit w={13}>OK</Fit></Button><Gap $w={9} /><Button $w={62}><Fit w={25}>閉じる</Fit></Button>
          </Row>
          <Grip />
        </Client>
      </Dialog>

      <ArrowLayer width="1434" height="812">
        <path d="M714 276L1052 362" stroke="#fe0000" strokeWidth="6" />
        <path d="M1052 353.500L1067 365.500 1048 370.500z" fill="#fe0000" />
      </ArrowLayer>
    </Screen>
  );
}
